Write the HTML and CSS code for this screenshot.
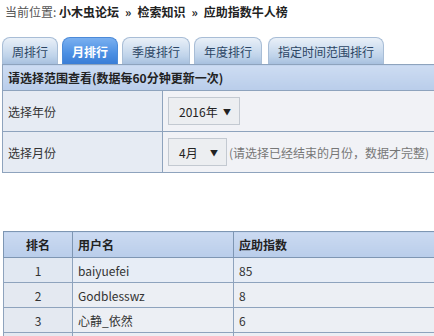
FILE: index.html
```html
<!DOCTYPE html>
<html>
<head>
<meta charset="utf-8">
<link rel="stylesheet" href="styles.css">
</head>
<body>
<div class="crumb"><span class="lbl">当前位置:</span> <b>小木虫论坛</b><b class="sep">»</b><b>检索知识</b><b class="sep">»</b><b>应助指数牛人榜</b></div>
<div class="tabs">
  <div class="tab">周排行</div>
  <div class="tab active">月排行</div>
  <div class="tab">季度排行</div>
  <div class="tab">年度排行</div>
  <div class="tab wide">指定时间范围排行</div>
</div>
<table class="form">
  <tr><th colspan="2">请选择范围查看(数据每60分钟更新一次)</th></tr>
  <tr>
    <td class="lab">选择年份</td>
    <td class="val"><span class="sel y">2016年<span class="arr">▼</span></span></td>
  </tr>
  <tr>
    <td class="lab">选择月份</td>
    <td class="val"><span class="sel m">4月<span class="arr">▼</span></span><span class="note">(请选择已经结束的月份，数据才完整)</span></td>
  </tr>
</table>
<table class="rank">
  <tr><th class="c1">排名</th><th class="c2">用户名</th><th class="c3">应助指数</th></tr>
  <tr class="r1"><td class="c1">1</td><td>baiyuefei</td><td>85</td></tr>
  <tr><td class="c1">2</td><td>Godblesswz</td><td>8</td></tr>
  <tr><td class="c1">3</td><td>心静_依然</td><td>6</td></tr>
  <tr><td class="c1"></td><td></td><td></td></tr>
</table>
</body>
</html>
```
FILE: styles.css
```css
html, body { margin: 0; padding: 0; overflow: hidden; background: #fff; }
body {
  font-family: "Noto Sans CJK SC", "Noto Sans", sans-serif;
  font-size: 12px;
  color: #333;
  width: 434px;
  height: 336px;
}
.crumb {
  padding: 4px 0 0 5px;
  line-height: 16px;
  color: #333;
}
.crumb .lbl { color: #555; }
.crumb b { color: #222; font-weight: bold; }
.crumb .sep { margin: 0 6px; }
.tabs {
  display: flex;
  gap: 4px;
  margin-top: 17px;
  padding-left: 2px;
  height: 27px;
}
.tab {
  height: 27px;
  box-sizing: border-box;
  padding: 1px 9px 0;
  line-height: 26px;
  font-size: 12px;
  color: #2b4564;
  border: 1px solid #a8bdd6;
  border-bottom: none;
  border-radius: 8px 8px 0 0;
  background: linear-gradient(#e9f0f8, #bfd3ea 70%, #a7c0de);
}
.tab.active {
  color: #fff;
  font-weight: bold;
  border-color: #4b8ad8;
  background: linear-gradient(#7ab0f0, #4b8fe3 60%, #3a7dd6);
}
.tab.wide { margin-left: 2px; }
table { border-collapse: collapse; }
.form {
  margin-left: 2px;
  width: 460px;
}
.form th {
  text-align: left;
  font-weight: bold;
  color: #222;
  height: 25px;
  padding: 0 0 0 5px;
  border: 1px solid #8ea3bd;
  background: linear-gradient(#cddcf2, #b9cdea);
}
.form td {
  height: 40px;
  border: 1px solid #8ea3bd;
  padding: 0;
}
.form .lab {
  width: 154px;
  padding-left: 5px;
  background: #e6ebf3;
  color: #333;
}
.form .val {
  background: #f1f2f6;
  padding-left: 5px;
}
.sel {
  display: inline-flex;
  align-items: center;
  box-sizing: border-box;
  height: 28px;
  border: 1px solid #c3c9d1;
  background: #eceef1;
  padding-left: 10px;
  color: #222;
  vertical-align: middle;
}
.sel.y { width: 72px; }
.sel.m { width: 59px; }
.arr {
  font-size: 8px;
  margin-left: auto;
  margin-right: 8px;
  color: #222;
}
.note {
  color: #777;
  vertical-align: middle;
  margin-left: 2px;
}
.rank {
  margin: 58px 0 0 3px;
  width: 460px;
}
.rank th {
  height: 25px;
  border: 1px solid #7e96b3;
  background: linear-gradient(#cbdaf1, #b9cdea);
  font-weight: bold;
  color: #222;
  text-align: left;
  padding: 0 0 0 5px;
}
.rank th.c1 { text-align: center; padding: 0; width: 68px; }
.rank th.c2 { width: 155px; }
.rank td {
  height: 24px;
  border: 1px solid #8ea3bd;
  padding: 0 0 0 5px;
  background: #eceff4;
  color: #333;
}
.rank td.c1 { text-align: center; padding: 0; background: #e4e9f1; }
.rank tr.r1 td { background: #e7edf6; }
.rank tr.r1 td.c1 { background: #e1e8f2; }
```
